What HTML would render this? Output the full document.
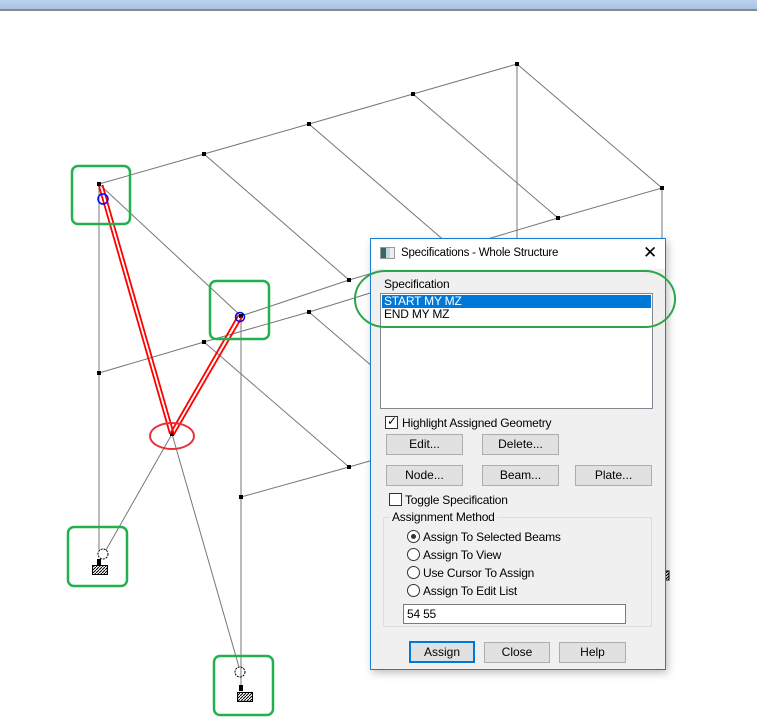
<!DOCTYPE html>
<html><head><meta charset="utf-8"><style>
*{margin:0;padding:0;box-sizing:border-box}
body{width:757px;height:725px;background:#fff;position:relative;overflow:hidden;font-family:"Liberation Sans",sans-serif;font-size:12px;color:#000}
.abs{position:absolute}
.dlg{left:370px;top:238px;width:296px;height:432px;background:#f0f0f0;border:1px solid #1a7fd4;box-shadow:2px 3px 8px rgba(0,0,0,.25)}
.title{left:0;top:0;width:294px;height:30px;background:#fff}
.btn{position:absolute;height:21px;background:#e1e1e1;border:1px solid #adadad;text-align:center;line-height:19px;font-size:12px}
.cb{position:absolute;width:13px;height:13px;border:1px solid #333;background:#fff}
.rd{position:absolute;width:13px;height:13px;border:1px solid #333;border-radius:50%;background:#fff}
.t{position:absolute;white-space:nowrap;font-size:12px;letter-spacing:-0.2px}
</style></head><body>
<div class="abs" style="left:0;top:0;width:757px;height:9px;background:linear-gradient(#bcd2ea,#a9c3e3)"></div>
<div class="abs" style="left:0;top:9px;width:757px;height:2px;background:#8a8a8a"></div>
<svg class="abs" style="left:0;top:0" width="757" height="725">
<g stroke="#777" stroke-width="1" fill="none">
<polyline points="99,184 204,154 309,124 413,94 517,64"/>
<line x1="517" y1="64" x2="662" y2="188"/>
<line x1="99" y1="184" x2="241" y2="316"/>
<line x1="204" y1="154" x2="349" y2="280"/>
<line x1="309" y1="124" x2="454" y2="249"/>
<line x1="413" y1="94" x2="558" y2="218"/>
<polyline points="241,316 349,280 454,249 558,218 662,188"/>
<line x1="517" y1="64" x2="517" y2="240"/>
<line x1="662" y1="188" x2="662" y2="240"/>
<line x1="99" y1="184" x2="99" y2="550"/>
<line x1="241" y1="316" x2="241" y2="690"/>
<polyline points="99,373 204,342 309,312 380,290"/>
<line x1="204" y1="342" x2="349" y2="467"/>
<line x1="309" y1="312" x2="380" y2="373"/>
<polyline points="241,497 349,467 380,458"/>
<line x1="172" y1="434" x2="106" y2="550"/>
<line x1="172" y1="434" x2="239" y2="667"/>
</g>
<g fill="#000">
<rect x="97" y="182" width="4" height="4"/><rect x="202" y="152" width="4" height="4"/><rect x="307" y="122" width="4" height="4"/><rect x="411" y="92" width="4" height="4"/><rect x="515" y="62" width="4" height="4"/><rect x="660" y="186" width="4" height="4"/><rect x="556" y="216" width="4" height="4"/><rect x="347" y="278" width="4" height="4"/><rect x="239" y="314" width="4" height="4"/><rect x="97" y="371" width="4" height="4"/><rect x="202" y="340" width="4" height="4"/><rect x="307" y="310" width="4" height="4"/><rect x="239" y="495" width="4" height="4"/><rect x="347" y="465" width="4" height="4"/><rect x="170" y="432" width="4" height="4"/>
<rect x="97" y="559" width="4" height="6"/><rect x="239" y="685" width="4" height="6"/>
</g>
<defs><pattern id="h" width="3" height="3" patternUnits="userSpaceOnUse"><path d="M0,3 L3,0" stroke="#000" stroke-width="1"/></pattern></defs>
<rect x="92.5" y="565.5" width="15" height="9" fill="url(#h)" stroke="#000"/>
<rect x="237.5" y="692.5" width="15" height="9" fill="url(#h)" stroke="#000"/>
<rect x="663" y="571" width="6" height="9" fill="url(#h)" stroke="#000"/>
<circle cx="103" cy="554" r="5" fill="none" stroke="#000" stroke-dasharray="2,1"/>
<circle cx="240" cy="672" r="5" fill="none" stroke="#000" stroke-dasharray="2,1"/>
<g stroke="#f00" stroke-width="1.8" fill="none">
<line x1="99" y1="186" x2="170" y2="434"/><line x1="102.5" y1="185" x2="173.5" y2="433"/>
<line x1="170" y1="434" x2="238.5" y2="315"/><line x1="173.5" y1="435" x2="242" y2="317"/>
</g>
<circle cx="103" cy="199" r="5" fill="none" stroke="#00f" stroke-width="1.5"/>
<circle cx="240" cy="317" r="4.5" fill="none" stroke="#00f" stroke-width="1.5"/>
<ellipse cx="172" cy="436" rx="22" ry="13" fill="none" stroke="#e8303a" stroke-width="2"/>
<g fill="none" stroke="#22b14c" stroke-width="2.5">
<rect x="72" y="166" width="58" height="58" rx="6"/>
<rect x="210" y="281" width="59" height="58" rx="6"/>
<rect x="68" y="527" width="59" height="59" rx="6"/>
<rect x="214" y="656" width="59" height="59" rx="6"/>
</g>
</svg>
<div class="abs dlg">
<div class="abs title">
<div class="abs" style="left:9px;top:8px;width:15px;height:12px;border:1px solid #999;background:linear-gradient(90deg,#2d6b6b 0 40%,#c8d8d8 40% 70%,#eee 70%)"></div>
<div class="t" style="left:30px;top:8px;font-size:11.5px">Specifications - Whole Structure</div>
<div class="t" style="left:272px;top:4px;font-size:17px">✕</div>
</div>
<div class="t" style="left:13px;top:38px">Specification</div>
<div class="abs" style="left:9px;top:54px;width:273px;height:116px;background:#fff;border:1px solid #828790"></div>
<div class="abs" style="left:11px;top:56px;width:269px;height:13px;background:#0078d7"></div>
<div class="t" style="left:13px;top:56px;color:#fff;line-height:13px">START MY MZ</div>
<div class="t" style="left:13px;top:69px;line-height:13px">END MY MZ</div>
<div class="cb" style="left:14px;top:177px"><span style="position:absolute;left:1px;top:-3px;font-size:12px">✓</span></div>
<div class="t" style="left:31px;top:177px">Highlight Assigned Geometry</div>
<div class="btn" style="left:15px;top:195px;width:77px">Edit...</div>
<div class="btn" style="left:111px;top:195px;width:77px">Delete...</div>
<div class="btn" style="left:15px;top:226px;width:77px">Node...</div>
<div class="btn" style="left:111px;top:226px;width:77px">Beam...</div>
<div class="btn" style="left:204px;top:226px;width:77px">Plate...</div>
<div class="cb" style="left:18px;top:254px"></div>
<div class="t" style="left:34px;top:254px">Toggle Specification</div>
<div class="abs" style="left:12px;top:278px;width:269px;height:110px;border:1px solid #dcdcdc"></div>
<div class="t" style="left:19px;top:271px;background:#f0f0f0;padding:0 2px">Assignment Method</div>
<div class="rd" style="left:36px;top:291px"><div style="position:absolute;left:3px;top:3px;width:5px;height:5px;border-radius:50%;background:#333"></div></div>
<div class="t" style="left:52px;top:291px">Assign To Selected Beams</div>
<div class="rd" style="left:36px;top:309px"></div><div class="t" style="left:52px;top:309px">Assign To View</div>
<div class="rd" style="left:36px;top:327px"></div><div class="t" style="left:52px;top:327px">Use Cursor To Assign</div>
<div class="rd" style="left:36px;top:345px"></div><div class="t" style="left:52px;top:345px">Assign To Edit List</div>
<div class="abs" style="left:32px;top:365px;width:223px;height:20px;background:#fff;border:1px solid #7a7a7a"></div>
<div class="t" style="left:36px;top:368px">54 55</div>
<div class="btn" style="left:38px;top:402px;width:66px;height:22px;border:2px solid #0078d7;line-height:18px">Assign</div>
<div class="btn" style="left:113px;top:403px;width:66px">Close</div>
<div class="btn" style="left:188px;top:403px;width:67px">Help</div>
</div>
<svg class="abs" style="left:0;top:0" width="757" height="725">
<rect x="355" y="271" width="320" height="56" rx="30" ry="28" fill="none" stroke="#2aa548" stroke-width="2"/>
</svg>
</body></html>
